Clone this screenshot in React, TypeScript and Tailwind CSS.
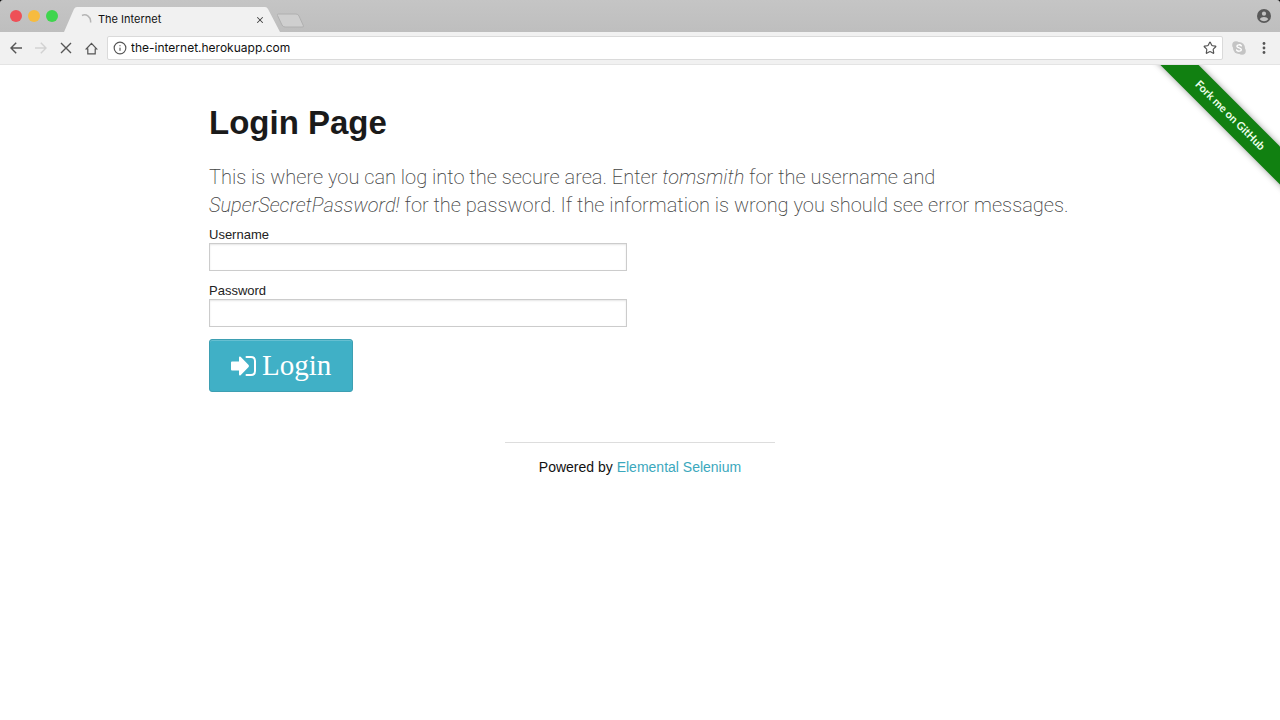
import { useState } from "react";
import { X, Star, Info } from "lucide-react";

const NAV_BUTTON = "flex size-5 items-center justify-center text-[#555]";

function TrafficLights() {
  return (
    <div className="flex h-8 items-center gap-[6px] pl-[10px]">
      <span className="size-3 rounded-full bg-[#ee5057]" />
      <span className="size-3 rounded-full bg-[#f6bb3f]" />
      <span className="size-3 rounded-full bg-[#3fd54d]" />
    </div>
  );
}

function BrowserTab() {
  return (
    <div className="relative flex h-[25px] w-[216px] items-center pr-[14px] pl-4">
      <svg className="absolute inset-0 h-full w-full" viewBox="0 0 216 25" preserveAspectRatio="none">
        <path d="M0 25 L10 2 Q11 0 13 0 H201 Q203 0 204 2 L216 25 Z" fill="#f1f1f1" />
      </svg>
      <svg className="relative size-3" viewBox="0 0 12 12" fill="none" stroke="#b5b5b5" strokeWidth="1.5">
        <path d="M2 1.5 C6 -0.5 11.5 3 10.5 8.5" />
      </svg>
      <span className="relative ml-[6px] flex-1 text-[11px] text-[#111]">The Internet</span>
      <button type="button" aria-label="Close tab" className="relative flex size-3 items-center justify-center text-[#444]">
        <X className="size-[10px]" strokeWidth={2.5} />
      </button>
    </div>
  );
}

function TabStrip() {
  return (
    <div className="bg-black">
      <div className="flex h-8 items-end rounded-t-[3px] bg-linear-to-b from-[#c5c5c5] to-[#bebebe]">
        <TrafficLights />
        <div className="ml-[6px] flex h-8 items-end">
          <BrowserTab />
        </div>
        <button type="button" aria-label="New tab" className="mb-1 -ml-1">
          <svg width="29" height="15" viewBox="0 0 29 15">
            <path d="M2.5 1 H20 Q22 1 23 3 L27.5 13 Q28 14 26 14 H9 Q7 14 6 12 L1.5 2.5 Q1 1 2.5 1 Z" fill="#cfcfcf" stroke="#b0b0b0" />
          </svg>
        </button>
        <button type="button" aria-label="Profile" className="mr-[9px] mb-[9px] ml-auto">
          <svg width="14" height="14" viewBox="0 0 14 14">
            <circle cx="7" cy="7" r="7" fill="#5a5a5a" />
            <circle cx="7" cy="4.7" r="2.1" fill="#c3c3c3" />
            <path d="M2.8 10.2 C4 7.4 10 7.4 11.2 10.2 C9.2 12.8 4.8 12.8 2.8 10.2 Z" fill="#c3c3c3" />
          </svg>
        </button>
      </div>
    </div>
  );
}

function Toolbar() {
  const [url, setUrl] = useState("the-internet.herokuapp.com");

  return (
    <div className="flex h-[33px] items-center gap-[5px] border-b border-[#e4e4e4] bg-[#f1f1f1] px-[6px]">
      <button type="button" aria-label="Back" className={NAV_BUTTON}>
        <svg width="12" height="12" viewBox="0 0 12 12" fill="none" stroke="currentColor" strokeWidth="1.4">
          <path d="M12 6 H1 M6.2 0.8 L1 6 L6.2 11.2" />
        </svg>
      </button>
      <button type="button" aria-label="Forward" disabled className="flex size-5 items-center justify-center text-[#d2d2d2]">
        <svg width="12" height="12" viewBox="0 0 12 12" fill="none" stroke="currentColor" strokeWidth="1.4">
          <path d="M0 6 H11 M5.8 0.8 L11 6 L5.8 11.2" />
        </svg>
      </button>
      <button type="button" aria-label="Stop" className={NAV_BUTTON}>
        <svg width="12" height="12" viewBox="0 0 12 12" fill="none" stroke="currentColor" strokeWidth="1.4">
          <path d="M1 1 L11 11 M11 1 L1 11" />
        </svg>
      </button>
      <button type="button" aria-label="Home" className={NAV_BUTTON}>
        <svg width="13" height="13" viewBox="0 0 13 13" fill="none" stroke="currentColor" strokeWidth="1.2">
          <path d="M1.2 7 L6.5 1.4 L11.8 7 H10.2 V11.8 H2.8 V7 Z" />
        </svg>
      </button>
      <div className="ml-px flex h-6 flex-1 items-center gap-1 rounded-xs border border-[#dadada] bg-white px-[5px]">
        <Info className="size-[14px] text-[#555]" strokeWidth={2} />
        <input
          type="text"
          aria-label="Address"
          value={url}
          onChange={(e) => setUrl(e.target.value)}
          className="min-w-0 flex-1 text-[12px] text-[#111] outline-none"
        />
        <button type="button" aria-label="Bookmark" className="text-[#555]">
          <Star className="size-[14px]" strokeWidth={2} />
        </button>
      </div>
      <button type="button" aria-label="Skype" className="ml-px flex size-5 items-center justify-center">
        <svg width="14" height="14" viewBox="0 0 14 14">
          <circle cx="7" cy="7" r="6" fill="#c4c4c4" />
          <circle cx="4" cy="4" r="3.8" fill="#c4c4c4" />
          <circle cx="10" cy="10" r="3.8" fill="#c4c4c4" />
          <path d="M9.3 4.9 C8.6 3.4 4.9 3.4 4.9 5.3 C4.9 7.3 9.3 6.4 9.3 8.6 C9.3 10.7 5.2 10.6 4.6 8.9" fill="none" stroke="#fff" strokeWidth="1.4" strokeLinecap="round" />
        </svg>
      </button>
      <button type="button" aria-label="Menu" className={NAV_BUTTON}>
        <svg width="4" height="14" viewBox="0 0 4 14" fill="currentColor">
          <circle cx="2" cy="2.5" r="1.4" />
          <circle cx="2" cy="7" r="1.4" />
          <circle cx="2" cy="11.5" r="1.4" />
        </svg>
      </button>
    </div>
  );
}

function ForkRibbon() {
  return (
    <div className="pointer-events-none absolute top-0 right-0 size-[150px] overflow-hidden">
      <a
        href="#fork"
        className="pointer-events-auto absolute top-[37px] -left-5 flex h-[27px] w-60 rotate-45 items-center justify-center bg-[#118011] font-['Lato',sans-serif] text-[11px] font-bold whitespace-nowrap text-[#eaffea] shadow-[0_0_6px_rgba(0,0,0,0.4)]"
      >
        Fork me on GitHub
      </a>
    </div>
  );
}

function Field({ id, label, type }: { id: string; label: string; type: string }) {
  return (
    <div className="mb-3 w-1/2 pr-[13px]">
      <label htmlFor={id} className="block text-[13px] leading-4 text-[#222]">
        {label}
      </label>
      <input
        id={id}
        name={id}
        type={type}
        className="block h-7 w-full border border-[#ccc] bg-white px-2 text-sm shadow-[inset_0_1px_2px_rgba(0,0,0,0.1)] outline-none"
      />
    </div>
  );
}

function LoginForm() {
  return (
    <form onSubmit={(e) => e.preventDefault()}>
      <Field id="username" label="Username" type="text" />
      <Field id="password" label="Password" type="password" />
      <button
        type="submit"
        className="flex h-[53px] items-center gap-[6px] rounded-[3px] border border-[#3d9fb2] bg-[#40b0c6] px-[21px] font-['Liberation_Serif',serif] text-[29px] text-white shadow-[inset_0_1px_0_rgba(255,255,255,0.2)]"
      >
        <svg width="25" height="20" viewBox="0 0 25 20">
          <path d="M0 6.5 Q0 5.5 1 5.5 H8 V1.5 Q8.2 0 9.6 0.8 L17.6 9 Q18.4 10 17.6 11 L9.6 19.2 Q8.2 20 8 18.5 V14.5 H1 Q0 14.5 0 13.5 Z" fill="#fff" />
          <path d="M15.5 1 H20 Q24 1 24 5 V15 Q24 19 20 19 H15.5" fill="none" stroke="#fff" strokeWidth="2" strokeLinecap="round" />
        </svg>
        <span>Login</span>
      </button>
    </form>
  );
}

export default function App() {
  return (
    <div className="min-h-screen bg-white font-['Liberation_Sans',Arial,sans-serif]">
      <header className="font-['Inter',sans-serif]">
        <TabStrip />
        <Toolbar />
      </header>

      <div className="relative">
        <ForkRibbon />
        <main className="mx-auto max-w-[862px] pt-9">
          <h1 className="text-[33px] leading-11 font-bold text-[#1a1a1a]">Login Page</h1>
          <p className="mt-[18px] font-['Roboto',sans-serif] text-[20px] leading-7 font-extralight text-[#444]">
            This is where you can log into the secure area. Enter <em>tomsmith</em> for the username and{" "}
            <em>SuperSecretPassword!</em> for the password. If the information is wrong you should see error messages.
          </p>
          <div className="mt-2">
            <LoginForm />
          </div>
        </main>

        <footer className="mx-auto mt-[50px] w-[270px] border-t border-[#ddd] pt-[14px] text-center text-[14px] leading-5 text-[#111]">
          Powered by{" "}
          <a href="#elemental-selenium" className="text-[#3ba8bd]">
            Elemental Selenium
          </a>
        </footer>
      </div>
    </div>
  );
}
